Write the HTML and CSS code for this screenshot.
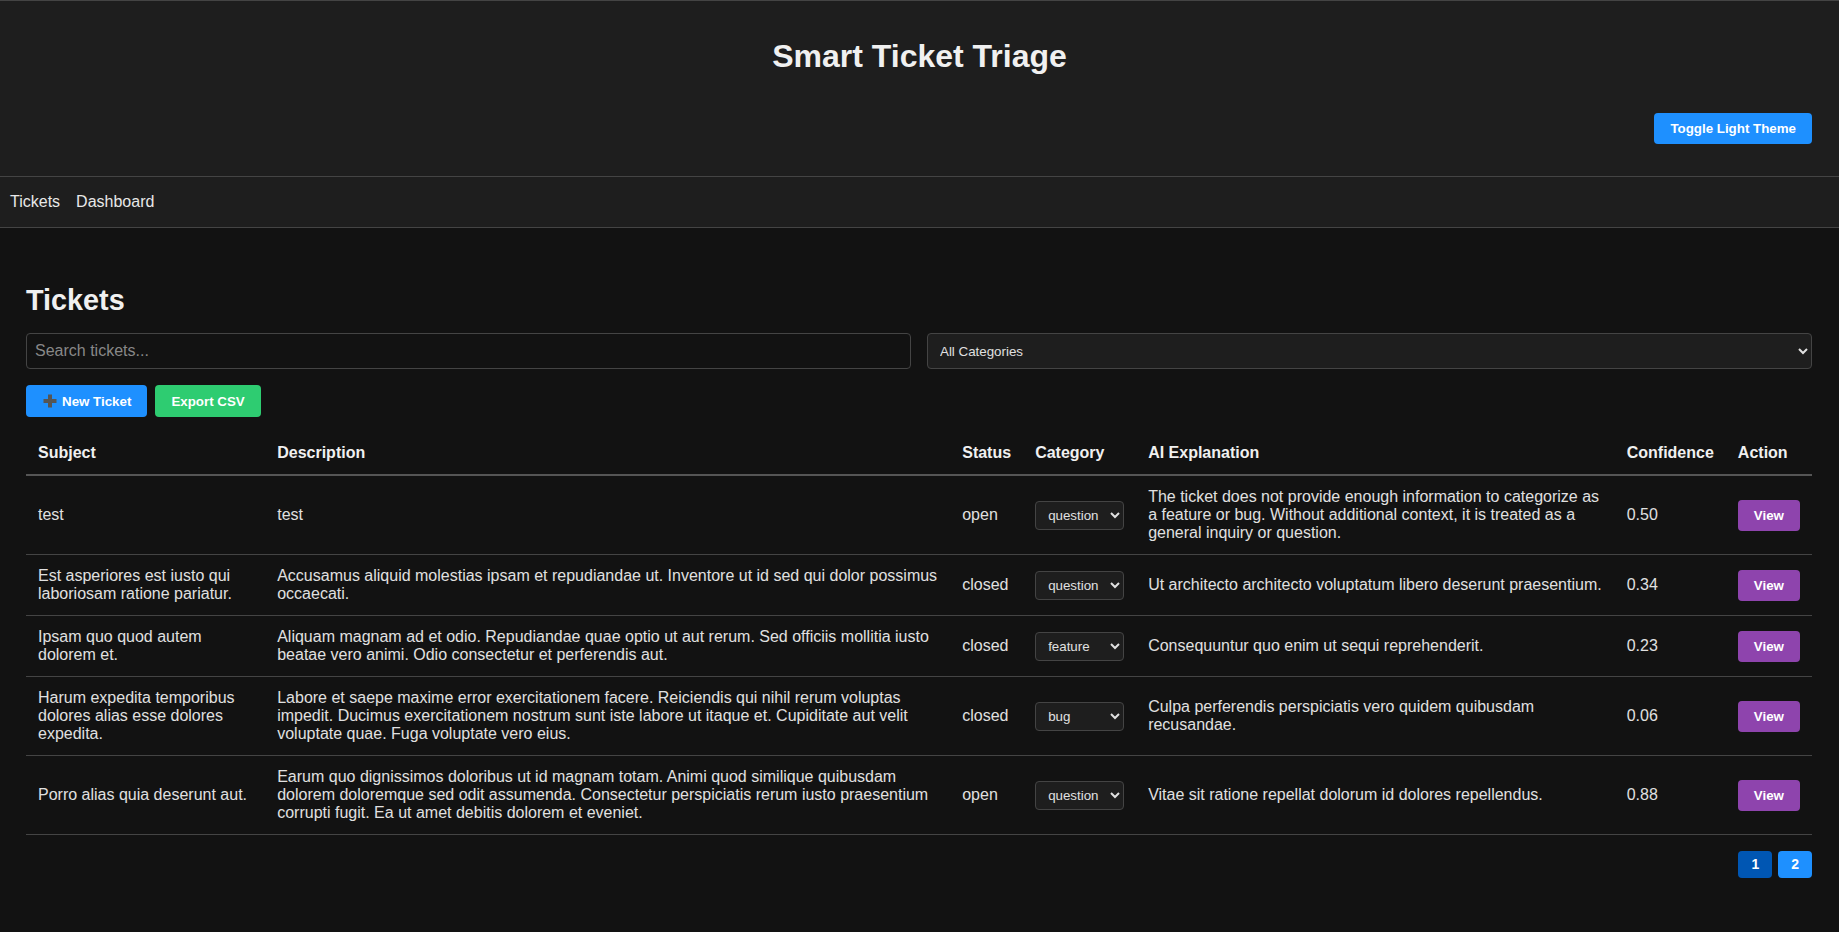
FILE: index.html
```html
<!DOCTYPE html>
<html lang="en">
<head>
<meta charset="utf-8">
<title>Smart Ticket Triage</title>
<link rel="stylesheet" href="styles.css">
</head>
<body>
<header class="app-header">
  <h1 class="app-title">Smart Ticket Triage</h1>
  <div class="header-actions">
    <button class="btn btn-blue">Toggle Light Theme</button>
  </div>
</header>
<nav class="app-nav">
  <a class="nav-link" href="#">Tickets</a>
  <a class="nav-link" href="#">Dashboard</a>
</nav>
<main class="page">
  <h2 class="page-title">Tickets</h2>
  <div class="filters">
    <input class="search-input" type="text" placeholder="Search tickets...">
    <select class="filter-select">
      <option>All Categories</option>
      <option>bug</option>
      <option>feature</option>
      <option>question</option>
    </select>
  </div>
  <div class="actions">
    <button class="btn btn-blue"><svg class="plus-icon" width="16" height="16" viewBox="0 0 16 16"><path d="M6 1.5h4v4.5h4.5v4H10v4.5H6V10H1.5V6H6z" fill="#555"/></svg> New Ticket</button>
    <button class="btn btn-green">Export CSV</button>
  </div>
  <table class="ticket-table">
    <thead>
      <tr>
        <th>Subject</th>
        <th>Description</th>
        <th>Status</th>
        <th>Category</th>
        <th>AI Explanation</th>
        <th>Confidence</th>
        <th>Action</th>
      </tr>
    </thead>
    <tbody>
      <tr>
        <td>test</td>
        <td>test</td>
        <td>open</td>
        <td><select class="cat-select"><option>bug</option><option>feature</option><option selected>question</option></select></td>
        <td>The ticket does not provide enough information to categorize as a feature or bug. Without additional context, it is treated as a general inquiry or question.</td>
        <td>0.50</td>
        <td><button class="btn btn-purple">View</button></td>
      </tr>
      <tr>
        <td>Est asperiores est iusto qui laboriosam ratione pariatur.</td>
        <td>Accusamus aliquid molestias ipsam et repudiandae ut. Inventore ut id sed qui dolor possimus occaecati.</td>
        <td>closed</td>
        <td><select class="cat-select"><option>bug</option><option>feature</option><option selected>question</option></select></td>
        <td>Ut architecto architecto voluptatum libero deserunt praesentium.</td>
        <td>0.34</td>
        <td><button class="btn btn-purple">View</button></td>
      </tr>
      <tr>
        <td>Ipsam quo quod autem dolorem et.</td>
        <td>Aliquam magnam ad et odio. Repudiandae quae optio ut aut rerum. Sed officiis mollitia iusto beatae vero animi. Odio consectetur et perferendis aut.</td>
        <td>closed</td>
        <td><select class="cat-select"><option>bug</option><option selected>feature</option><option>question</option></select></td>
        <td>Consequuntur quo enim ut sequi reprehenderit.</td>
        <td>0.23</td>
        <td><button class="btn btn-purple">View</button></td>
      </tr>
      <tr>
        <td>Harum expedita temporibus dolores alias esse dolores expedita.</td>
        <td>Labore et saepe maxime error exercitationem facere. Reiciendis qui nihil rerum voluptas impedit. Ducimus exercitationem nostrum sunt iste labore ut itaque et. Cupiditate aut velit voluptate quae. Fuga voluptate vero eius.</td>
        <td>closed</td>
        <td><select class="cat-select"><option selected>bug</option><option>feature</option><option>question</option></select></td>
        <td>Culpa perferendis perspiciatis vero quidem quibusdam recusandae.</td>
        <td>0.06</td>
        <td><button class="btn btn-purple">View</button></td>
      </tr>
      <tr>
        <td>Porro alias quia deserunt aut.</td>
        <td>Earum quo dignissimos doloribus ut id magnam totam. Animi quod similique quibusdam dolorem doloremque sed odit assumenda. Consectetur perspiciatis rerum iusto praesentium corrupti fugit. Ea ut amet debitis dolorem et eveniet.</td>
        <td>open</td>
        <td><select class="cat-select"><option>bug</option><option>feature</option><option selected>question</option></select></td>
        <td>Vitae sit ratione repellat dolorum id dolores repellendus.</td>
        <td>0.88</td>
        <td><button class="btn btn-purple">View</button></td>
      </tr>
    </tbody>
  </table>
  <div class="pagination">
    <button class="btn page-btn page-btn-active">1</button>
    <button class="btn page-btn">2</button>
  </div>
</main>
</body>
</html>
```

FILE: styles.css
```css
* {
  box-sizing: border-box;
}

html, body {
  margin: 0;
  background: #121212;
  color: #e0e0e0;
  font-family: "Liberation Sans", Arial, sans-serif;
  font-size: 16px;
}

.app-header {
  background: #1e1e1e;
  border-top: 1px solid #444;
  border-bottom: 1px solid #444;
  padding: 16px 27px;
}

.app-title {
  margin: 21px 0 22px;
  text-align: center;
  font-size: 32px;
  font-weight: bold;
  color: #f0f0f0;
  line-height: 37px;
}

.header-actions {
  display: flex;
  justify-content: flex-end;
  padding: 16px 0;
}

.app-nav {
  background: #1e1e1e;
  border-bottom: 1px solid #444;
  padding: 16px 10px;
  display: flex;
  gap: 16px;
  line-height: 18px;
}

.nav-link {
  color: #e8e8e8;
  text-decoration: none;
}

.page {
  padding: 32px 27px 32px 26px;
}

.page-title {
  margin: 24px 0 16px;
  font-size: 28.8px;
  line-height: 33px;
  font-weight: bold;
  color: #f0f0f0;
}

.filters {
  display: flex;
  gap: 16px;
  margin-bottom: 16px;
}

.search-input,
.filter-select {
  flex: 1 1 0;
  min-width: 0;
  height: 36px;
  border: 1px solid #444;
  border-radius: 4px;
  color: #e0e0e0;
  font-family: "Liberation Sans", Arial, sans-serif;
}

.search-input {
  background: #121212;
  padding: 8px;
  font-size: 16px;
}

.search-input::placeholder {
  color: #888;
}

.filter-select {
  background: #1e1e1e;
  padding: 0 8px;
  font-size: 13.33px;
  color-scheme: dark;
}

.actions {
  display: flex;
  gap: 8px;
  margin-bottom: 15px;
}

.btn {
  border: none;
  border-radius: 4px;
  padding: 8px 16px;
  font-family: "Liberation Sans", Arial, sans-serif;
  font-size: 13.33px;
  font-weight: bold;
  line-height: 15px;
  color: #fff;
  cursor: pointer;
  display: inline-flex;
  align-items: center;
}

.btn-blue {
  background: #1e90ff;
}

.btn-green {
  background: #2ecc71;
}

.btn-purple {
  background: #8e44ad;
}

.plus-icon {
  margin-right: 4px;
}

.ticket-table {
  width: 100%;
  border-collapse: collapse;
}

.ticket-table th,
.ticket-table td {
  padding: 12px;
  text-align: left;
  vertical-align: middle;
  line-height: 18px;
}

.ticket-table th {
  font-weight: bold;
  color: #f0f0f0;
  border-bottom: 2px solid #555;
}

.ticket-table td {
  border-bottom: 1px solid #444;
}

.cat-select {
  background: #1e1e1e;
  color: #e0e0e0;
  border: 1px solid #444;
  border-radius: 4px;
  padding: 5px 8px;
  font-family: "Liberation Sans", Arial, sans-serif;
  font-size: 13.33px;
  color-scheme: dark;
}

.pagination {
  display: flex;
  justify-content: flex-end;
  gap: 6px;
  margin-top: 16px;
}

.page-btn {
  background: #1e90ff;
  padding: 6px 13px;
  font-size: 14px;
}

.page-btn-active {
  background: #0056b3;
}
```
